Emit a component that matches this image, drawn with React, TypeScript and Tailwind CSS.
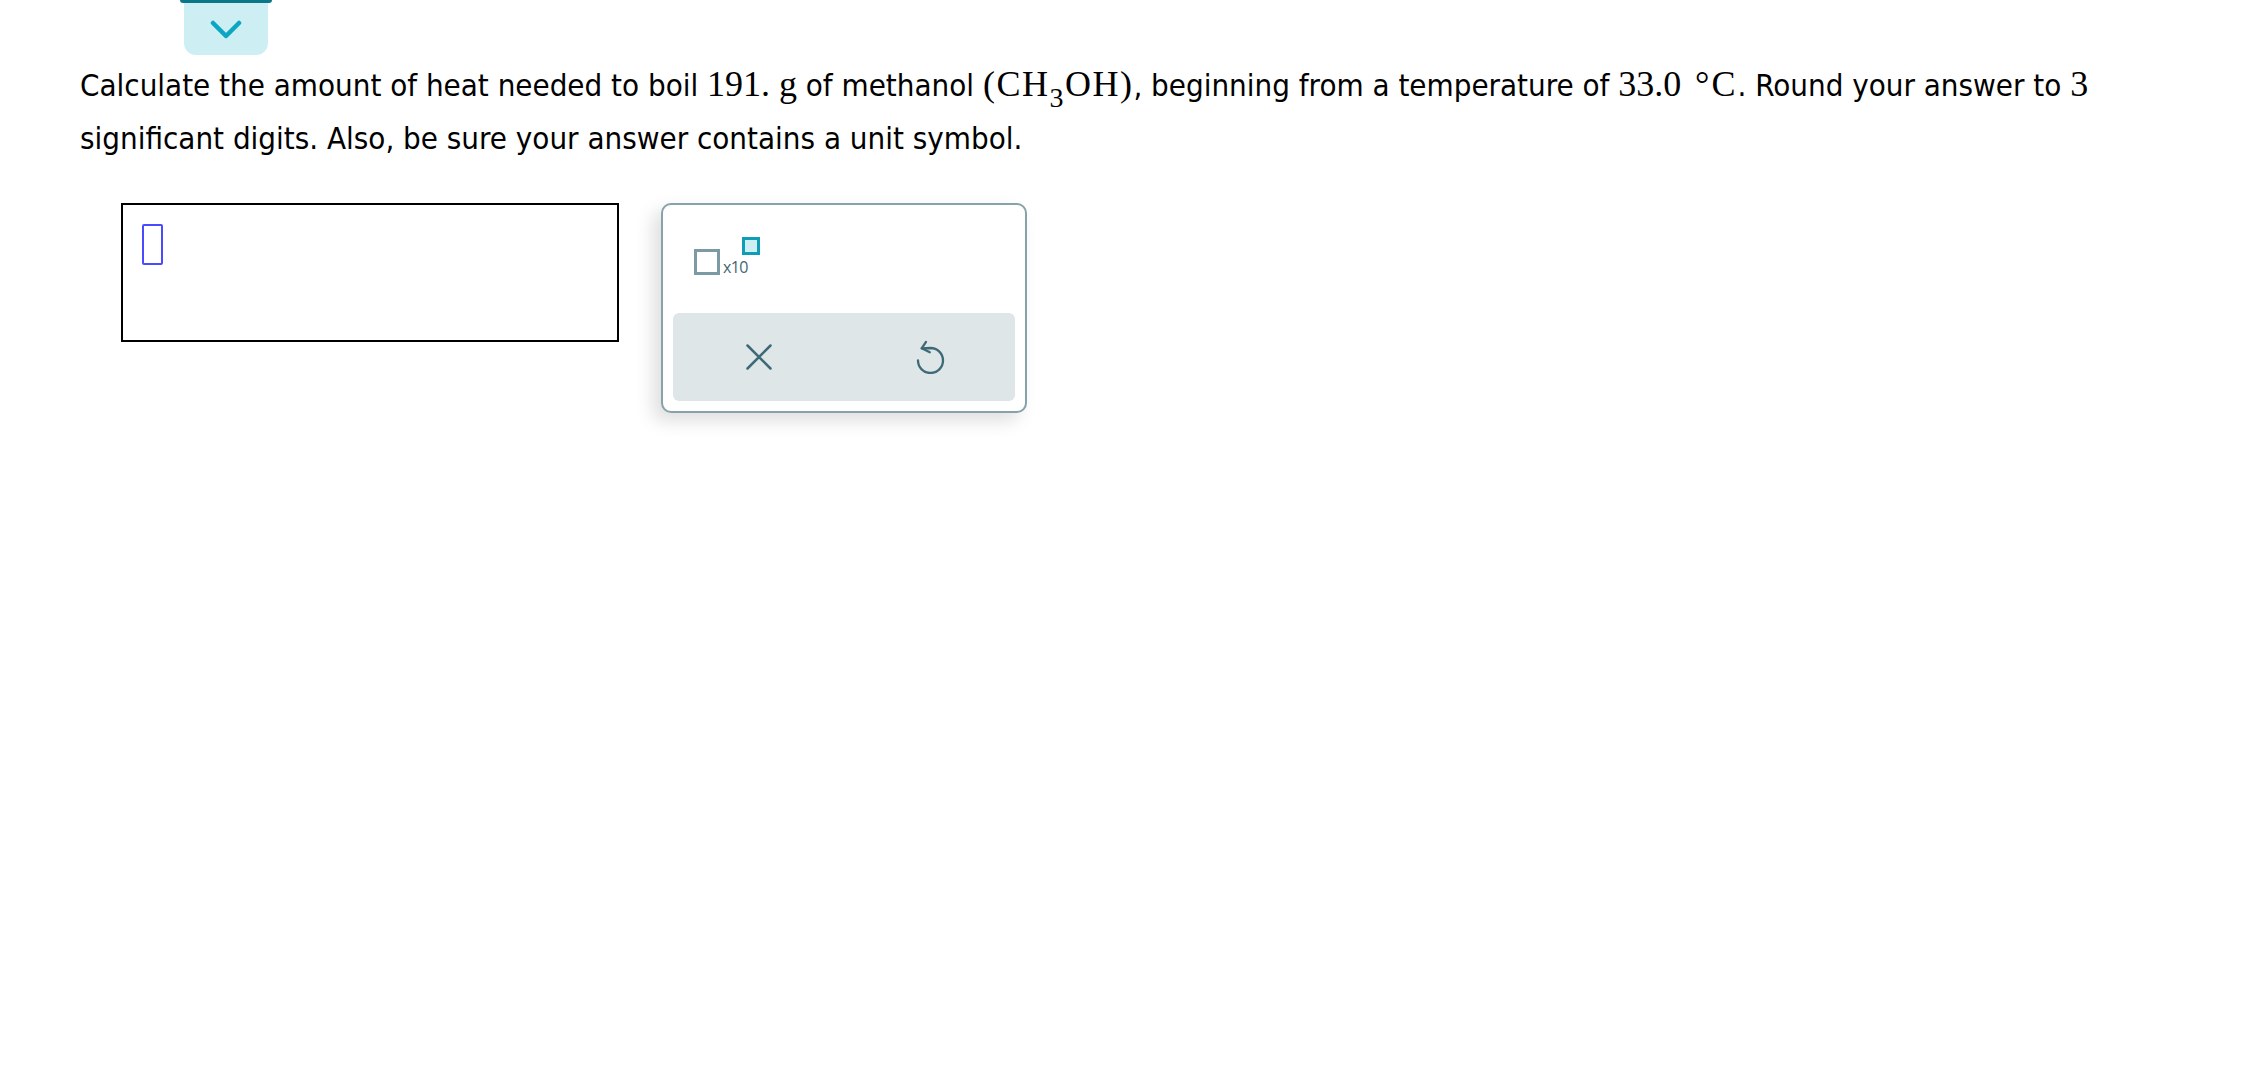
import React from "react";

const Serif = ({ children, className = "" }: { children: React.ReactNode; className?: string }) => (
  <span className={`font-['Liberation_Serif',serif] font-stretch-normal text-[36px] leading-none ${className}`}>{children}</span>
);

const UndoIcon = () => (
  <svg width="32" height="34" viewBox="0 0 32 34" fill="none" stroke="currentColor" strokeWidth="2.3" strokeLinecap="round" strokeLinejoin="round">
    <path d="M7.7 8.3 16.5 8A12.5 12.5 0 1 1 4 20.5" />
    <path d="M12 1.9 7.7 8.3 15.8 12.2" />
  </svg>
);

const CloseIcon = () => (
  <svg width="26" height="26" viewBox="0 0 26 26" fill="none" stroke="currentColor" strokeWidth="2.5" strokeLinecap="round">
    <path d="M1.5 1.5l23 23M24.5 1.5l-23 23" />
  </svg>
);

export default function App() {
  return (
    <div className="min-h-screen bg-white text-black font-['DejaVu_Sans_Condensed','DejaVu_Sans',sans-serif] font-stretch-semi-condensed">
      {/* collapse tab */}
      <div className="ml-[180px] flex w-[92px] flex-col items-center">
        <div className="h-[3px] w-[92px] rounded-b-[3px] bg-[#0b7687]" />
        <div className="flex h-[52px] w-[84px] items-center justify-center rounded-b-[12px] bg-[#cdeff4]">
          <svg width="32" height="19" viewBox="0 0 32 19" fill="none" stroke="#0aa6c2" strokeWidth="4.5" strokeLinecap="round" strokeLinejoin="round">
            <path d="M3 3l13 13L29 3" />
          </svg>
        </div>
      </div>

      {/* question */}
      <p className="px-[80px] pt-[4px] text-[31px] leading-[52px]">
        Calculate the amount of heat needed to boil <Serif>191.</Serif> <Serif>g</Serif> of methanol{" "}
        <Serif className="tracking-[1.5px]">
          (CH<span className="align-[-0.4em] text-[28px] leading-none">3</span>OH)
        </Serif>
        , beginning from a temperature of <Serif>33.0</Serif>{" "}
        <Serif className="ml-[5px] tracking-[2px]">°C</Serif>. Round your answer to <Serif>3</Serif> significant digits.
        Also, be sure your answer contains a unit symbol.
      </p>

      {/* answer area */}
      <div className="mt-[39px] ml-[121px] flex items-start gap-[42px]">
        <div className="h-[139px] w-[498px] border-2 border-black pl-[19px] pt-[19px]">
          <div className="h-[41px] w-[21px] rounded-[2px] border-2 border-[#4a4aff]" />
        </div>

        <div className="w-[366px] rounded-[10px] border-2 border-[#86a2aa] bg-white px-[10px] pb-[10px] shadow-[-8px_8px_18px_rgba(0,0,0,0.13)]">
          <div className="flex h-[108px] items-start pl-[21px] pt-[32px]">
            <div className="mt-[12px] h-[26px] w-[26px] border-[3px] border-[#7b9aa3]" />
            <div className="ml-[3px] mt-[22px] font-['Open_Sans',sans-serif] font-stretch-normal text-[16px] leading-[16px] tracking-[-0.6px] text-[#3f6674]">
              x10
            </div>
            <div className="-ml-[6px] h-[18px] w-[18px] border-[3px] border-[#0e9db7] bg-[#cdeff4]" />
          </div>
          <div className="grid h-[88px] grid-cols-2 rounded-[6px] bg-[#dfe6e8] text-[#3e6a78]">
            <div className="flex items-center justify-center">
              <CloseIcon />
            </div>
            <div className="flex items-center justify-center">
              <UndoIcon />
            </div>
          </div>
        </div>
      </div>
    </div>
  );
}
